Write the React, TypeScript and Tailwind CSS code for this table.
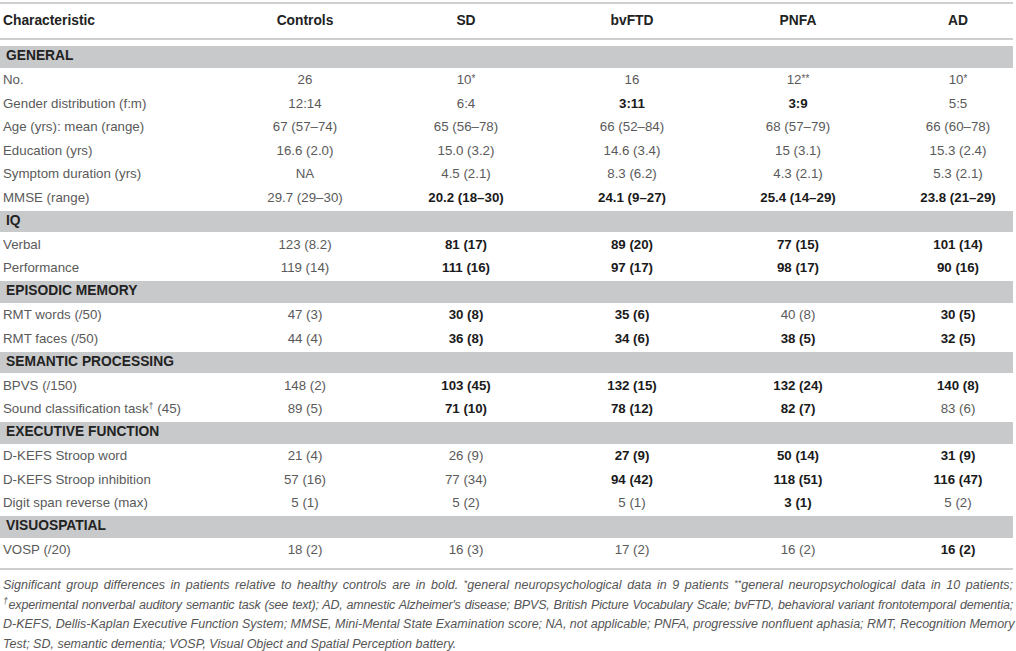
type Cell = string | { v: string; b?: boolean; sup?: string };

type Row =
  | { section: string }
  | { label: string; labelSup?: string; labelRest?: string; cells: Cell[] };

const B = (v: string): Cell => ({ v, b: true });

const rows: Row[] = [
  { section: "GENERAL" },
  { label: "No.", cells: ["26", { v: "10", sup: "*" }, "16", { v: "12", sup: "**" }, { v: "10", sup: "*" }] },
  { label: "Gender distribution (f:m)", cells: ["12:14", "6:4", B("3:11"), B("3:9"), "5:5"] },
  { label: "Age (yrs): mean (range)", cells: ["67 (57–74)", "65 (56–78)", "66 (52–84)", "68 (57–79)", "66 (60–78)"] },
  { label: "Education (yrs)", cells: ["16.6 (2.0)", "15.0 (3.2)", "14.6 (3.4)", "15 (3.1)", "15.3 (2.4)"] },
  { label: "Symptom duration (yrs)", cells: ["NA", "4.5 (2.1)", "8.3 (6.2)", "4.3 (2.1)", "5.3 (2.1)"] },
  { label: "MMSE (range)", cells: ["29.7 (29–30)", B("20.2 (18–30)"), B("24.1 (9–27)"), B("25.4 (14–29)"), B("23.8 (21–29)")] },
  { section: "IQ" },
  { label: "Verbal", cells: ["123 (8.2)", B("81 (17)"), B("89 (20)"), B("77 (15)"), B("101 (14)")] },
  { label: "Performance", cells: ["119 (14)", B("111 (16)"), B("97 (17)"), B("98 (17)"), B("90 (16)")] },
  { section: "EPISODIC MEMORY" },
  { label: "RMT words (/50)", cells: ["47 (3)", B("30 (8)"), B("35 (6)"), "40 (8)", B("30 (5)")] },
  { label: "RMT faces (/50)", cells: ["44 (4)", B("36 (8)"), B("34 (6)"), B("38 (5)"), B("32 (5)")] },
  { section: "SEMANTIC PROCESSING" },
  { label: "BPVS (/150)", cells: ["148 (2)", B("103 (45)"), B("132 (15)"), B("132 (24)"), B("140 (8)")] },
  { label: "Sound classification task", labelSup: "†", labelRest: " (45)", cells: ["89 (5)", B("71 (10)"), B("78 (12)"), B("82 (7)"), "83 (6)"] },
  { section: "EXECUTIVE FUNCTION" },
  { label: "D-KEFS Stroop word", cells: ["21 (4)", "26 (9)", B("27 (9)"), B("50 (14)"), B("31 (9)")] },
  { label: "D-KEFS Stroop inhibition", cells: ["57 (16)", "77 (34)", B("94 (42)"), B("118 (51)"), B("116 (47)")] },
  { label: "Digit span reverse (max)", cells: ["5 (1)", "5 (2)", "5 (1)", B("3 (1)"), "5 (2)"] },
  { section: "VISUOSPATIAL" },
  { label: "VOSP (/20)", cells: ["18 (2)", "16 (3)", "17 (2)", "16 (2)", B("16 (2)")] },
];

const cols = "grid grid-cols-[223px_164px_158px_174px_158px_1fr]";

function Value({ cell, last }: { cell: Cell; last: boolean }) {
  const c = typeof cell === "string" ? { v: cell } : cell;
  return (
    <div className={`text-center ${last ? "pl-[26px]" : ""} ${c.b ? "font-bold text-[#1a1a1a]" : ""}`}>
      {c.v}
      {c.sup && <sup className="text-[10px] relative -top-[2px]">{c.sup}</sup>}
    </div>
  );
}

export default function App() {
  return (
    <div
      className="w-[1016px] h-[651px] bg-white text-[13.3px] text-[#5a5a5a] pr-[3px]"
      style={{ fontFamily: '"Liberation Sans", Arial, sans-serif' }}
    >
      {/* header */}
      <div className="pt-[2px]">
        <div className={`${cols} h-[38px] items-center border-y-2 border-[#cfcfcf] font-bold text-[#222] text-[13.8px]`}>
          <div className="pl-[3px]">Characteristic</div>
          {["Controls", "SD", "bvFTD", "PNFA", "AD"].map((h, i) => (
            <div key={h} className={`text-center ${i === 4 ? "pl-[26px]" : ""}`}>{h}</div>
          ))}
        </div>
      </div>

      <div className="pt-[5px]">
        {rows.map((r, i) =>
          "section" in r ? (
            <div key={i} className="h-[23.5px] flex items-center bg-[#c8c9cb] pl-[6px] font-bold text-[#222] text-[13.8px] border-y border-white">
              {r.section}
            </div>
          ) : (
            <div key={i} className={`${cols} h-[23.5px] items-center`}>
              <div className="pl-[3px] whitespace-nowrap">
                {r.label}
                {r.labelSup && <sup className="text-[9px]">{r.labelSup}</sup>}
                {r.labelRest}
              </div>
              {r.cells.map((c, j) => (
                <Value key={j} cell={c} last={j === 4} />
              ))}
            </div>
          )
        )}
      </div>

      {/* footnote */}
      <div className="mt-[6px] border-t-2 border-[#cfcfcf] pt-[6px] pl-[3px] italic text-[12.5px] leading-[19.7px] text-[#555]">
        <div className="text-justify [text-align-last:justify] whitespace-nowrap">
          Significant group differences in patients relative to healthy controls are in bold.{" "}
          <sup className="text-[9px] relative -top-[3px]">*</sup>general neuropsychological data in 9 patients{" "}
          <sup className="text-[9px] relative -top-[3px]">**</sup>general neuropsychological data in 10 patients;
        </div>
        <div className="text-justify [text-align-last:justify] whitespace-nowrap tracking-[-0.2px]">
          <sup className="text-[9px]">†</sup>experimental nonverbal auditory semantic task (see text); AD, amnestic Alzheimer's disease; BPVS, British Picture Vocabulary Scale; bvFTD, behavioral variant frontotemporal dementia;
        </div>
        <div className="text-justify [text-align-last:justify] whitespace-nowrap">
          D-KEFS, Dellis-Kaplan Executive Function System; MMSE, Mini-Mental State Examination score; NA, not applicable; PNFA, progressive nonfluent aphasia; RMT, Recognition Memory
        </div>
        <div className="whitespace-nowrap">
          Test; SD, semantic dementia; VOSP, Visual Object and Spatial Perception battery.
        </div>
      </div>
    </div>
  );
}
